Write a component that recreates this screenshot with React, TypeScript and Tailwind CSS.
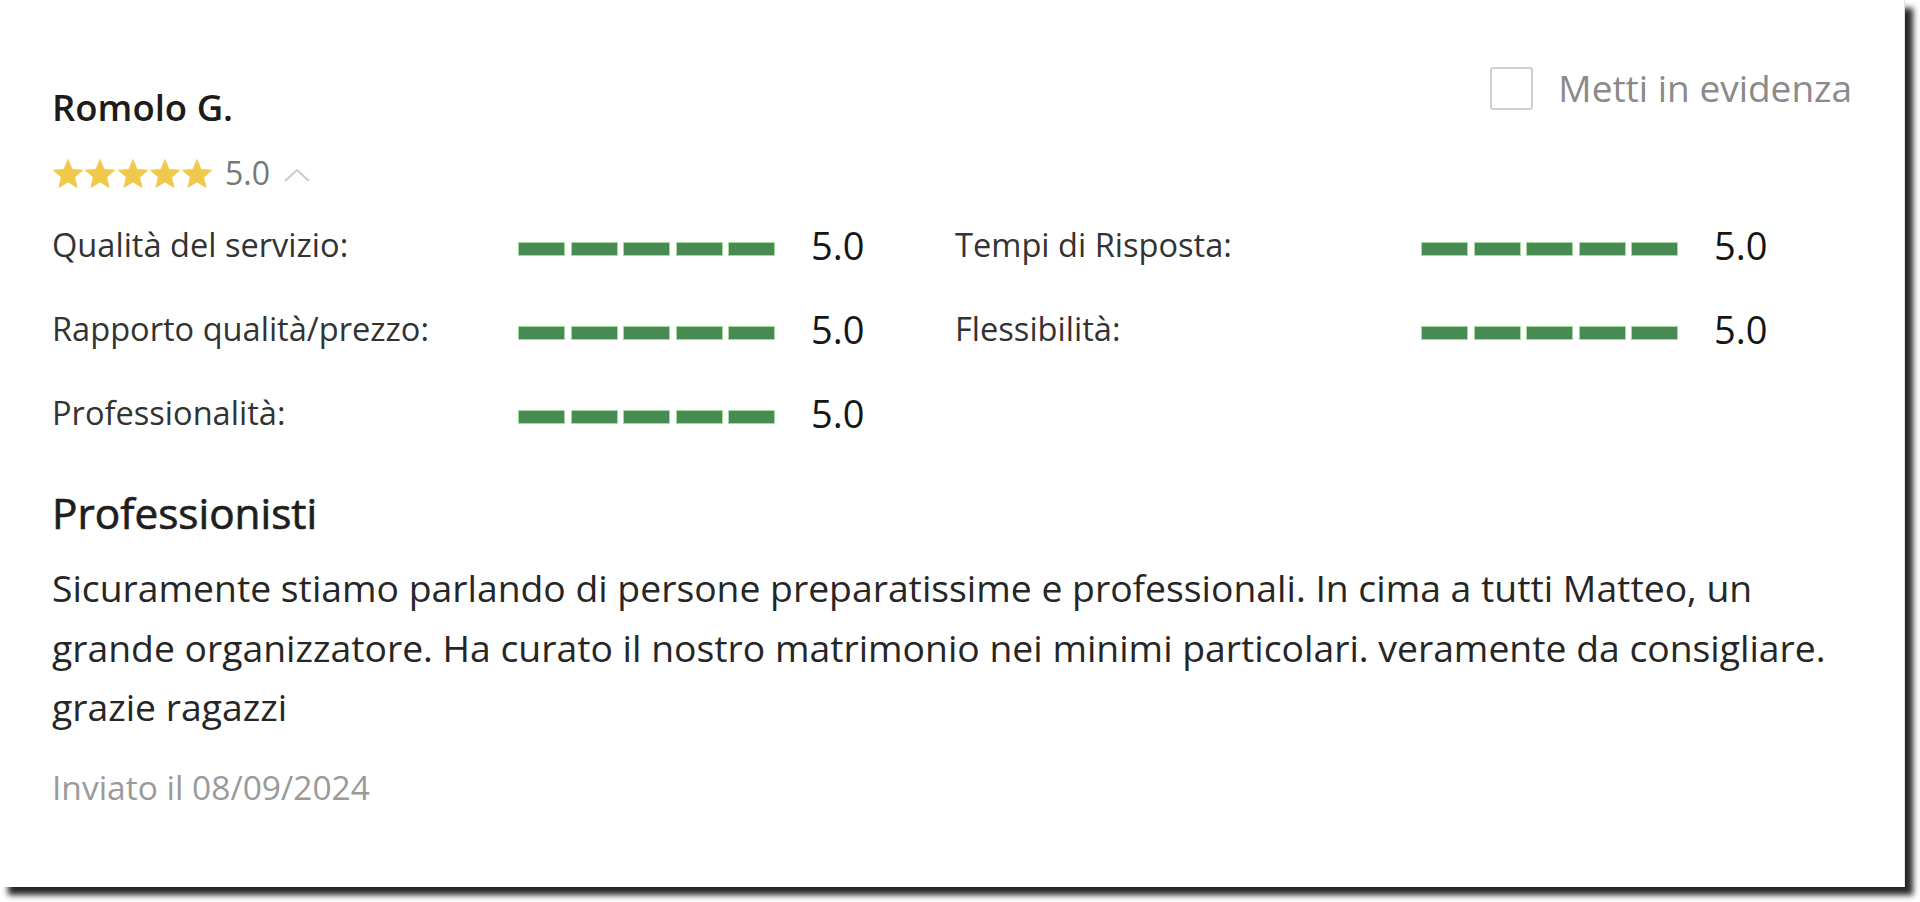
import React from "react";

const Star = () => (
  <svg width="30" height="29" viewBox="0 0 30 29" className="block">
    <polygon
      points="15,0.5 19.11,10.34 29.74,11.21 21.66,18.16 24.11,28.54 15,23 5.89,28.54 8.34,18.16 0.26,11.21 10.89,10.34"
      fill="#F0C94B"
      stroke="#F0C94B"
      strokeWidth="0.8"
      strokeLinejoin="round"
    />
  </svg>
);

const Bars = () => (
  <div className="flex gap-[5.5px] w-[257px] mt-[8px]">
    {[0, 1, 2, 3, 4].map((i) => (
      <div key={i} className="w-[47px] h-[14px] bg-[#478b53] border border-[#a6dba0]" />
    ))}
  </div>
);

const Row = ({ label }: { label: string }) => (
  <div className="flex items-center h-[84px]">
    <div className="w-[466px] text-[32.6px] leading-[40px] text-[#333]">{label}</div>
    <Bars />
    <div className="ml-[36px] text-[38px] leading-[40px] text-[#151515]">5.0</div>
  </div>
);

export default function App() {
  return (
    <div className="w-[1920px] h-[902px] bg-white overflow-hidden font-['Open_Sans',sans-serif]">
      <div className="w-[1905px] h-[887px] bg-white shadow-[8px_8px_6px_rgba(0,0,0,0.85)] border-r border-[#e4e4e4] px-[52px]">
        <div className="flex justify-between items-start">
          <div>
            <div className="mt-[87px] h-[40px] text-[36.5px] leading-[40px] font-semibold text-[#1c1c1c]">
              Romolo G.
            </div>
            <div className="mt-[26px] h-[40px] flex items-center">
              <div className="flex gap-[2.25px] ml-[1px]">
                <Star />
                <Star />
                <Star />
                <Star />
                <Star />
              </div>
              <span className="ml-[13px] text-[32px] leading-[40px] text-[#777]">5.0</span>
              <svg width="30" height="18" viewBox="0 0 30 18" className="ml-[12px] mt-[4px]">
                <polyline points="3,15 15,4 27,15" fill="none" stroke="#c9c9c9" strokeWidth="2" />
              </svg>
            </div>
          </div>
          <div className="mt-[66px] flex items-center h-[44px]">
            <div className="w-[43px] h-[43px] border-2 border-[#cfcfcf] rounded-[3px] bg-white" />
            <span className="ml-[25px] text-[37px] leading-[40px] text-[#8a8a8a]">Metti in evidenza</span>
          </div>
        </div>

        <div className="mt-[10px] grid grid-cols-[903px_903px]">
          <Row label="Qualità del servizio:" />
          <Row label="Tempi di Risposta:" />
          <Row label="Rapporto qualità/prezzo:" />
          <Row label="Flessibilità:" />
          <Row label="Professionalità:" />
        </div>

        <div className="mt-[34px] h-[48px] text-[42.3px] leading-[48px] text-[#1e1e1e] [-webkit-text-stroke:0.7px_#1e1e1e]">
          Professionisti
        </div>
        <div className="mt-[21px] text-[37.3px] leading-[59.5px] text-[#262626]">
          Sicuramente stiamo parlando di persone preparatissime e professionali. In cima a tutti Matteo, un
          <br />
          grande organizzatore. Ha curato il nostro matrimonio nei minimi particolari. veramente da consigliare.
          <br />
          grazie ragazzi
        </div>
        <div className="mt-[30px] h-[40px] text-[33.5px] leading-[40px] text-[#9a9a9a]">
          Inviato il 08/09/2024
        </div>
      </div>
    </div>
  );
}
